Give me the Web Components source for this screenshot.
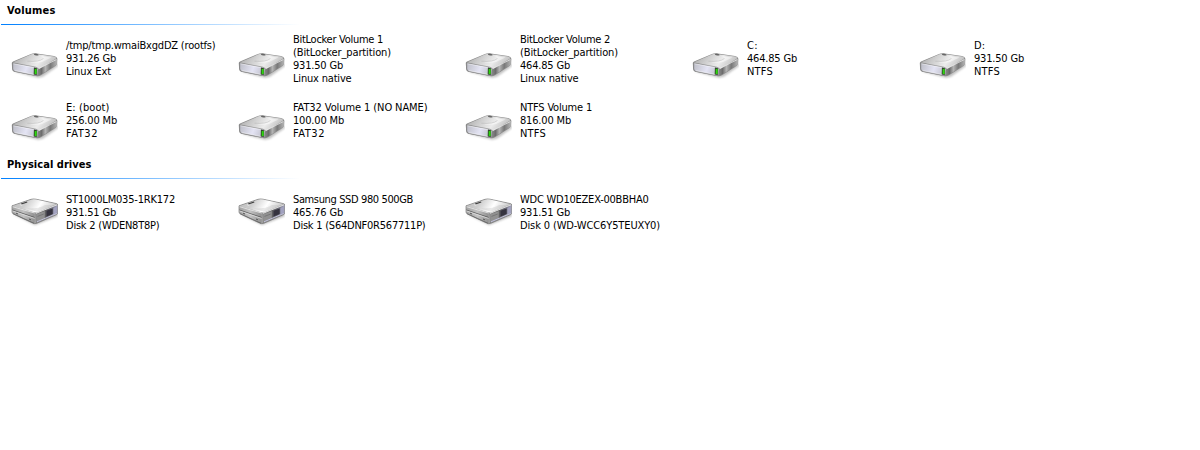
<!DOCTYPE html>
<html lang="en"><head><meta charset="utf-8"><title>Drives</title>
<style>body{margin:0;background:#fff;color:#000;font:11px/13px "DejaVu Sans Condensed","DejaVu Sans",sans-serif;font-stretch:condensed}</style></head><body>
<drive-group label="Volumes" label-width="48.5">
<drive-item kind="volume"><fit-text w="149.5">/tmp/tmp.wmaiBxgdDZ (rootfs)</fit-text><fit-text w="50">931.26 Gb</fit-text><fit-text w="45">Linux Ext</fit-text></drive-item>
<drive-item kind="volume"><fit-text w="90">BitLocker Volume 1</fit-text><fit-text w="98">(BitLocker_partition)</fit-text><fit-text w="50">931.50 Gb</fit-text><fit-text w="58.5">Linux native</fit-text></drive-item>
<drive-item kind="volume"><fit-text w="90">BitLocker Volume 2</fit-text><fit-text w="98">(BitLocker_partition)</fit-text><fit-text w="50">464.85 Gb</fit-text><fit-text w="58.5">Linux native</fit-text></drive-item>
<drive-item kind="volume"><fit-text w="11">C:</fit-text><fit-text w="50">464.85 Gb</fit-text><fit-text w="26">NTFS</fit-text></drive-item>
<drive-item kind="volume"><fit-text w="11">D:</fit-text><fit-text w="50">931.50 Gb</fit-text><fit-text w="26">NTFS</fit-text></drive-item>
<drive-item kind="volume"><fit-text w="43.5">E: (boot)</fit-text><fit-text w="51">256.00 Mb</fit-text><fit-text w="32">FAT32</fit-text></drive-item>
<drive-item kind="volume"><fit-text w="134.5">FAT32 Volume 1 (NO NAME)</fit-text><fit-text w="51">100.00 Mb</fit-text><fit-text w="32">FAT32</fit-text></drive-item>
<drive-item kind="volume"><fit-text w="72">NTFS Volume 1</fit-text><fit-text w="51">816.00 Mb</fit-text><fit-text w="26">NTFS</fit-text></drive-item>
</drive-group>
<drive-group label="Physical drives" label-width="84.5">
<drive-item kind="disk"><fit-text w="109">ST1000LM035-1RK172</fit-text><fit-text w="50">931.51 Gb</fit-text><fit-text w="93.5">Disk 2 (WDEN8T8P)</fit-text></drive-item>
<drive-item kind="disk"><fit-text w="120">Samsung SSD 980 500GB</fit-text><fit-text w="50">465.76 Gb</fit-text><fit-text w="132.5">Disk 1 (S64DNF0R567711P)</fit-text></drive-item>
<drive-item kind="disk"><fit-text w="128.5">WDC WD10EZEX-00BBHA0</fit-text><fit-text w="50">931.51 Gb</fit-text><fit-text w="140">Disk 0 (WD-WCC6Y5TEUXY0)</fit-text></drive-item>
</drive-group>
<script>
// A line of text whose tracking is adjusted to a set width.
class FitText extends HTMLElement{
 constructor(){super();this.attachShadow({mode:'open'}).innerHTML='<style>:host{display:block;white-space:nowrap;height:13px}</style><span><slot></slot></span>';}
 connectedCallback(){const s=this.shadowRoot.querySelector('span');const w=+this.getAttribute('w'),n=this.textContent.length;
  if(w&&n)s.style.letterSpacing=((w-s.getBoundingClientRect().width)/n).toFixed(4)+'px';}
}
const volume=`<svg viewBox="10 35 48 48"><defs>
<linearGradient id="t" x1="0" y1="0" x2="1" y2=".25"><stop stop-color="#a4a4a4"/><stop offset=".4" stop-color="#cfcfcf"/><stop offset=".7" stop-color="#ececec"/><stop offset="1" stop-color="#c4c4c4"/></linearGradient>
<linearGradient id="f" x1="0" y1="0" x2="1" y2=".2"><stop stop-color="#bcbdc6"/><stop offset=".6" stop-color="#e4e4f4"/><stop offset="1" stop-color="#c4c4d0"/></linearGradient>
<linearGradient id="r" x1="0" y1="0" x2="1" y2="0"><stop stop-color="#8b8b8b"/><stop offset=".2" stop-color="#6c6c6c"/><stop offset=".4" stop-color="#b4b4b4"/><stop offset=".65" stop-color="#787878"/><stop offset="1" stop-color="#b5b5b5"/></linearGradient>
<filter id="b" x="-10%" y="-30%" width="120%" height="180%"><feGaussianBlur stdDeviation=".9"/></filter></defs>
<path d="M14 71.5L38 77.8L43 76.8L58 66L56 61Z" fill="#777" opacity=".45" filter="url(#b)"/>
<path d="M11.8 63.2Q11.5 62.3 13 61.4L31 53.9Q33 53 35 53.2L54 56Q57 56.6 57.4 58.8L57 63.8Q56.8 65.3 54 67L41 75.3Q38.8 76.7 36 76.1L14 71.8Q12.3 71.3 12.1 69Z" fill="#8d8d8d"/>
<path d="M37.8 68.5L57 58.8L56.8 63.8Q56 65.5 53.4 66.8L41 74.6L37.7 76Z" fill="url(#r)"/>
<path d="M12.5 62.6L31.5 54.3Q33 53.6 35 53.9L54 56.5Q57.2 57.4 55.5 59L40.5 68Q38.5 69 36 68Z" fill="url(#t)"/>
<path d="M27.5 61.2Q35 64 42 62L51.5 57.6L39.5 56Q46 57.2 40 60Q34 62 27.5 61.2Z" fill="#fff" opacity=".5"/>
<path d="M27.5 61.2Q39 62.3 43.5 58.4" fill="none" stroke="#999" stroke-width=".5" opacity=".7"/>
<path d="M12.7 62.9L36 67.2Q38.1 67.7 38 69.3L37.6 74.6Q37.4 76 35.5 75.4L14.6 71.2Q13 70.8 12.8 68.8Z" fill="url(#f)" stroke="#777" stroke-width=".6"/>
<path d="M13.4 63.7L34 67.6M14.8 70.6L34 74.5" stroke="#fff" stroke-width=".6" opacity=".8"/>
<path d="M38.5 68.8L56.2 59.6" stroke="#fff" stroke-width=".8" opacity=".75"/>
<path d="M33.9 67.6L37 68.3L36.8 75.1L33.7 74.5Z" fill="#324929"/><path d="M34.7 69.2L36.7 68.7V73.9L34.7 74Z" fill="#2dd50f"/>
<ellipse cx="36.3" cy="54.6" rx="2.4" ry=".9" transform="rotate(8 36 54)" fill="#666"/></svg>`;
const disk=`<svg viewBox="10 35 48 48"><defs>
<linearGradient id="t" x1="0" y1="0" x2="1" y2=".2"><stop stop-color="#bbb"/><stop offset=".35" stop-color="#cecece"/><stop offset=".68" stop-color="#fff"/><stop offset="1" stop-color="#ccc"/></linearGradient>
<linearGradient id="f"><stop stop-color="#a4a4a4"/><stop offset=".5" stop-color="#c2c2c2"/><stop offset="1" stop-color="#909090"/></linearGradient>
<linearGradient id="r"><stop stop-color="#828282"/><stop offset=".4" stop-color="#5d5d5d"/><stop offset=".7" stop-color="#686872"/><stop offset="1" stop-color="#a4a4bd"/></linearGradient>
<filter id="b" x="-10%" y="-30%" width="120%" height="180%"><feGaussianBlur stdDeviation=".8"/></filter></defs>
<path d="M13 60L35 71L58 62L56 58Z" fill="#666" opacity=".45" filter="url(#b)"/>
<path d="M12 51.8L31 45.3Q33.5 44.6 36 45.2L56.4 49.6Q58 50 58 51.5V58.6Q58 60 56.5 60.6L37 69.2Q34.5 70 32.5 69L13.5 60Q12 59.4 12 58Z" fill="#a2a2a2" stroke="#666" stroke-width=".6"/>
<path d="M12.4 52L31 45.7Q33.5 45.1 36 45.6L56.5 50.1L37 58.6L34 58.2Z" fill="url(#t)"/>
<path d="M12.4 52.5L34.5 58.8V69.2L14 60Q12.5 59 12.4 58Z" fill="url(#f)"/>
<path d="M12.6 52.7L34.5 59" stroke="#eee" stroke-width=".8"/>
<path d="M12.4 56L34.5 63.4" stroke="#505050" stroke-width=".8"/><path d="M12.5 56.9L34.5 64.4" stroke="#e9e9e9" stroke-width=".7"/>
<path d="M13 59.6L34 69.2" stroke="#5d5d5d" stroke-width=".7"/>
<path d="M16 59.1L18 60M29 65L31 65.9" stroke="#555" stroke-width="1"/>
<path d="M35.5 59.5L57.4 51V59.5L36 69Z" fill="url(#r)"/>
<path d="M36.2 60.3L44.8 57V64.7L36.2 68.3Z" fill="#919191"/><path d="M37.5 62.4L43.8 60" stroke="#6c6c6c" stroke-width=".7"/>
<path d="M46.5 56.7L52.7 54.4V60L46.5 62.6Z" fill="#35333f"/><path d="M53.5 54L56.8 52.6V58.6L53.5 60.2Z" fill="#a2a2c0"/>
<path d="M36 59.4L57 50.8" stroke="#f1f1f1" stroke-width=".8"/><path d="M37 67.8L56.7 59.4" stroke="#c3c3dc" stroke-width="1"/>
<path d="M21.2 50.1L27.2 48" stroke="#3b3b3b" stroke-width="1.1"/><path d="M20.3 50.8L22.2 51.2" stroke="#fff" stroke-width=".7"/>
<path d="M27 54.5Q39 55 45 51L53.5 51L37 57.7Z" fill="#aaa" opacity=".25"/></svg>`;
class DriveItem extends HTMLElement{
 constructor(){super();this.attachShadow({mode:'open'});}
 connectedCallback(){this.shadowRoot.innerHTML=`<style>:host{display:flex;align-items:center;height:61px;padding-left:10px;gap:8px;box-sizing:border-box}svg{display:block;width:48px;height:48px;margin-top:1px;flex:none}</style>${this.getAttribute('kind')==='disk'?disk:volume}<div><slot></slot></div>`;}
}
class DriveGroup extends HTMLElement{
 constructor(){super();this.attachShadow({mode:'open'});}
 connectedCallback(){this.shadowRoot.innerHTML=`<style>:host{display:block;height:154px}h2{margin:0;padding:4px 0 7px 7px;font:bold 11px/13px "DejaVu Sans Condensed","DejaVu Sans",sans-serif;font-stretch:condensed}.rule{height:1px;width:299px;margin-left:1px;background:linear-gradient(90deg,#0080ff,#fff)}.items{display:grid;grid-template-columns:repeat(5,227px);row-gap:1px;padding-top:3px}</style><h2><fit-text w="${this.getAttribute('label-width')}">${this.getAttribute('label')}</fit-text></h2><div class="rule"></div><div class="items"><slot></slot></div>`;}
}
customElements.define('drive-group',DriveGroup);
customElements.define('drive-item',DriveItem);
customElements.define('fit-text',FitText);
</script></body></html>
